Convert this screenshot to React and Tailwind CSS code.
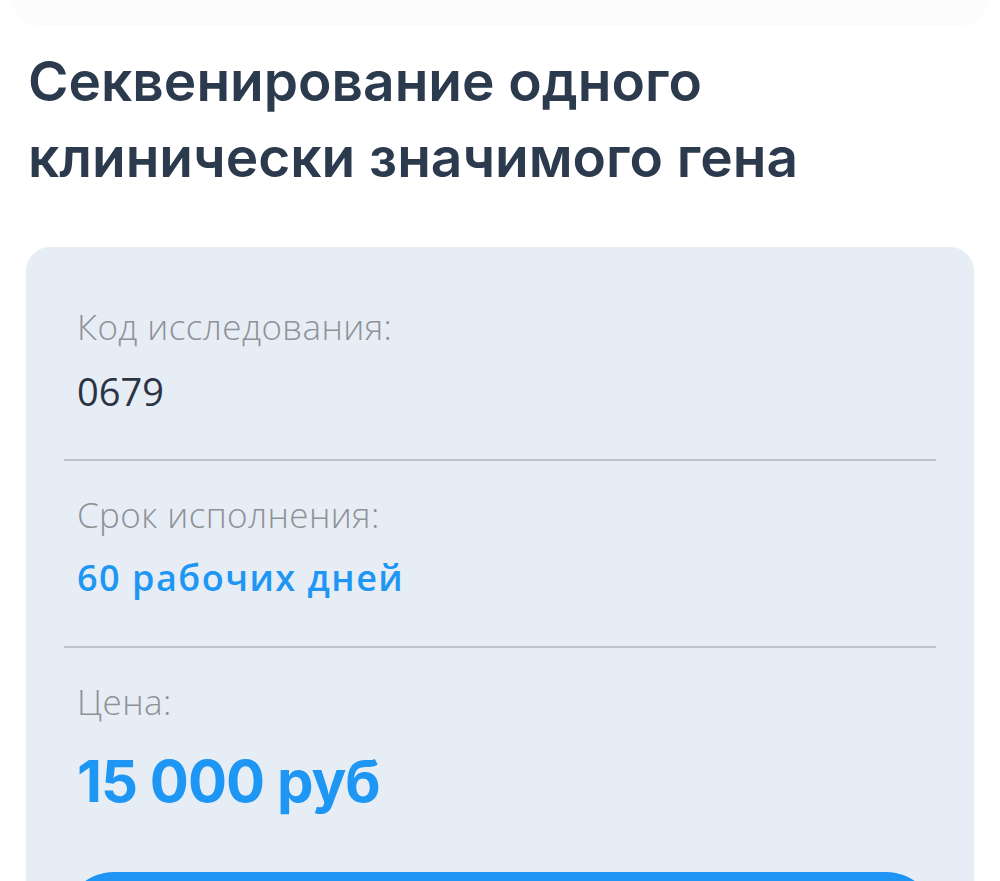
export default function App() {
  const rows = [
    { label: 'Код исследования:', value: '0679', kind: 'code' },
    { label: 'Срок исполнения:', value: '60 рабочих дней', kind: 'term' },
  ];

  return (
    <div className="min-h-[881px] w-full overflow-hidden bg-white font-['Open_Sans',sans-serif]">
      {/* faint edge of the card above */}
      <div className="mx-[12px] h-[26px] rounded-b-[40px] bg-[#fcfcfc]" />

      <h1 className="mt-[17px] px-[28px] font-['Inter',sans-serif] text-[55px] font-semibold leading-[76px] text-[#2c3a4e]">
        Секвенирование одного
        <br />
        клинически значимого гена
      </h1>

      <div className="mx-[26px] mt-[52px] rounded-[24px] bg-[#e7edf5] px-[38px] pt-[60px] pb-[40px]">
        {rows.map((r, i) => (
          <div key={r.label}>
            <div className={`px-[13px] pb-[46px] ${i > 0 ? 'pt-[34px]' : ''}`}>
              <p className="text-[35px] font-light leading-[40px] tracking-[0.4px] text-[#8e9296]">{r.label}</p>
              {r.kind === 'code' ? (
                <p className="mt-[22px] text-[38px] leading-[44px] text-[#2a3444]">{r.value}</p>
              ) : (
                <p className="mt-[21px] text-[36px] font-semibold leading-[44px] tracking-[1.5px] text-[#1e96f3]">{r.value}</p>
              )}
            </div>
            <div className="h-[2px] bg-[#bfc4cb]" />
          </div>
        ))}

        <div className="px-[13px] pt-[34px]">
          <p className="text-[35px] font-light leading-[40px] tracking-[0.4px] text-[#8e9296]">Цена:</p>
          <p className="mt-[24px] font-['Inter',sans-serif] text-[58px] font-bold leading-[70px] tracking-[-1px] text-[#1e96f3]">15 000 руб</p>
        </div>

        <button className="mt-[56px] flex h-[100px] w-full items-center justify-center rounded-full bg-[#1e94f5] text-[34px] font-semibold text-white" />
      </div>
    </div>
  );
}
